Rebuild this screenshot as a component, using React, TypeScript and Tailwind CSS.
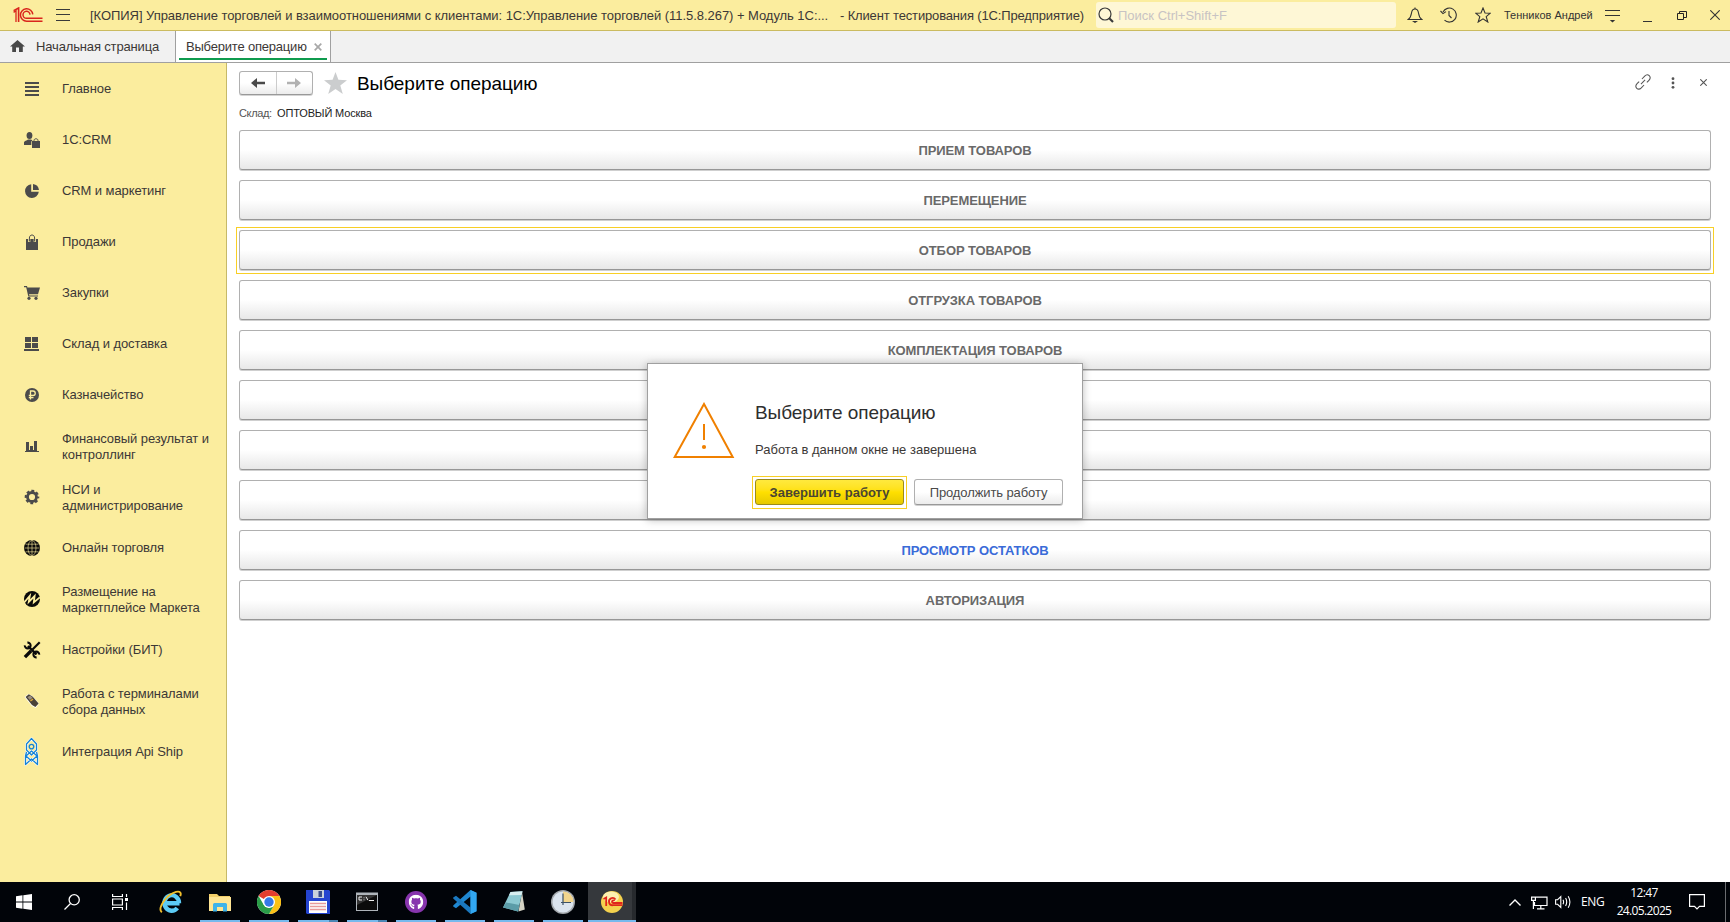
import type { ReactNode } from "react";
import { FaGithub } from "react-icons/fa";

const dark = "#4b4b4b";

function Logo1C() {
  return (
    <svg width="30" height="16" viewBox="0 0 30 16" fill="none" stroke="#d9251d" strokeWidth="1.5">
      <path d="M0.6 5.4 L3 3.8 V15" strokeWidth="1.3" />
      <path d="M0.6 3.6 L5.6 1 V15" strokeWidth="1.6" />
      <path d="M19.8 7.4 A6.2 6.2 0 1 0 13.8 14.2 H29.5" />
      <path d="M17 7.6 A3.5 3.5 0 1 0 13.6 11.3 H29.5" />
    </svg>
  );
}

function TitleBar() {
  return (
    <header className="flex h-[31px] shrink-0 items-center border-b border-[#cbbb60] bg-[#fbed9e] text-[13px] text-[#3c3836]">
      <div className="flex w-[90px] shrink-0 items-center gap-[13px] pl-[13px]">
        <Logo1C />
        <svg width="14" height="12" viewBox="0 0 14 12" fill="#3a3a3a">
          <path d="M0 0h14v1H0zM0 5h14v1H0zM0 11h14v1H0z" />
        </svg>
      </div>
      <div className="w-[750px] shrink-0 whitespace-nowrap pt-px tracking-[-0.05px]">
        [КОПИЯ] Управление торговлей и взаимоотношениями с клиентами: 1С:Управление торговлей (11.5.8.267) + Модуль 1С:...
      </div>
      <div className="w-[256px] shrink-0 whitespace-nowrap pt-px tracking-[-0.15px]">- Клиент тестирования (1С:Предприятие)</div>
      <div className="flex h-[26px] w-[300px] shrink-0 items-center gap-[4px] rounded-[3px] bg-[#fef7d6] pl-[2px] text-[#c8c3c3]">
        <svg width="16" height="16" viewBox="0 0 16 16" fill="none" stroke="#3a3a3a">
          <circle cx="7" cy="7" r="6" strokeWidth="1.2" />
          <path d="M11 11 L15 15" strokeWidth="2.2" />
        </svg>
        <span className="pt-px">Поиск Ctrl+Shift+F</span>
      </div>
      <div className="flex flex-1 items-center text-[#333]">
        <svg className="ml-[11px]" width="16" height="16" viewBox="0 0 16 16" fill="none" stroke="#333" strokeWidth="1.1">
          <path d="M1.2 12.5 C4 10.5 4.2 8 4.6 5.5 C5 3 6.4 2 8 2 C9.6 2 11 3 11.4 5.5 C11.8 8 12 10.5 14.8 12.5 Z" />
          <path d="M8 0.5 V2" />
          <path d="M5 14 H11 L8 16 Z" fill="#333" stroke="none" />
        </svg>
        <svg className="ml-[17px]" width="17" height="16" viewBox="0 0 17 16" fill="none" stroke="#333" strokeWidth="1.1">
          <path d="M3 5 A7 7 0 1 1 4.5 13.2" />
          <path d="M0.5 4 L3 6.6 L6 4.6" />
          <path d="M9 4 V8.5 L11.5 11" />
        </svg>
        <svg className="ml-[18px]" width="16" height="16" viewBox="0 0 16 16" fill="none" stroke="#333" strokeWidth="1.1">
          <path d="M8 1 L10 6 L15.3 6.2 L11.2 9.6 L12.8 15 L8 11.8 L3.2 15 L4.8 9.6 L0.7 6.2 L6 6 Z" />
        </svg>
        <span className="ml-[13px] w-[89px] whitespace-nowrap text-[11px]">Тенников Андрей</span>
        <svg className="ml-[12px] mt-[3px]" width="15" height="13" viewBox="0 0 15 13" fill="#333">
          <path d="M0 0h15v1H0zM0 5h15v1H0zM4.8 10h5.4L7.5 12.5z" />
        </svg>
        <svg className="ml-[23px] mt-px" width="9" height="12" viewBox="0 0 9 12" fill="#333">
          <path d="M0 11h9v1H0z" />
        </svg>
        <svg className="ml-[25px]" width="10" height="9" viewBox="0 0 10 9" fill="none" stroke="#222">
          <path d="M0.5 2.5h6v6h-6zM2.5 2.5v-2h7v6h-3" />
        </svg>
        <svg className="ml-[23px]" width="10" height="10" viewBox="0 0 10 10" fill="none" stroke="#333" strokeWidth="1.1">
          <path d="M0.3 0.3 L9.7 9.7 M9.7 0.3 L0.3 9.7" />
        </svg>
      </div>
    </header>
  );
}

function TabBar() {
  return (
    <nav className="flex h-8 shrink-0 border-b border-[#a0a0a0] bg-[#f1f1f1] text-[13px] tracking-[-0.15px] text-[#3c3836]">
      <div className="flex w-[175px] items-center pl-[10px]">
        <svg className="mb-[2px]" width="15" height="12" viewBox="0 0 15 12" fill="#484848">
          <path d="M7.5 0 L15 6.4 H12.8 V12 H9 V7.5 H6 V12 H2.2 V6.4 H0 Z" />
        </svg>
        <span className="ml-[11px]">Начальная страница</span>
      </div>
      <div className="flex w-[156px] flex-col border-x border-[#a0a0a0] bg-white px-[3px]">
        <div className="flex h-[27px] items-center pl-[7px] pt-[4px]">
          <span className="tracking-[-0.2px]">Выберите операцию</span>
          <svg className="ml-[7px]" width="8" height="8" viewBox="0 0 8 8" fill="none" stroke="#a8a8a8" strokeWidth="1.7">
            <path d="M0.7 0.7 L7.3 7.3 M7.3 0.7 L0.7 7.3" />
          </svg>
        </div>
        <div className="h-[2px] bg-[#0f9b4e]" />
      </div>
    </nav>
  );
}

const sections: { label: string; icon: ReactNode }[] = [
  {
    label: "Главное",
    icon: <path d="M1 1h14v2H1zM1 5h14v2H1zM1 9h14v2H1zM1 13h14v2H1z" fill={dark} />,
  },
  {
    label: "1С:CRM",
    icon: (
      <g fill={dark}>
        <ellipse cx="5.5" cy="3.5" rx="2.9" ry="3.5" />
        <path d="M0 13 V10.3 C0 9 3 8.6 4 7.5 H7 L8.5 8.5 L7.3 9.5 V13 Z" />
        <path d="M8 9 H16 V16 H8 Z" />
        <path d="M10 10.5 V8.5 C10 6.2 14 6.2 14 8.5 V10.5" fill="none" stroke={dark} />
      </g>
    ),
  },
  {
    label: "CRM и маркетинг",
    icon: (
      <g fill={dark}>
        <path d="M7.2 1.2 A6.9 6.9 0 1 0 14.8 8.8 H7.2 Z" />
        <path d="M9 1 A7 7 0 0 1 15 7 H9 Z" />
      </g>
    ),
  },
  {
    label: "Продажи",
    icon: (
      <g>
        <path d="M2 5 H14 V16 H2 Z" fill={dark} />
        <path d="M5.2 8 V4 C5.2 0 10.8 0 10.8 4 V8" fill="none" stroke="#fbed9e" strokeWidth="2.2" />
        <path d="M5.4 7.5 V4 C5.4 0 10.6 0 10.6 4 V7.5" fill="none" stroke={dark} strokeWidth="1" />
      </g>
    ),
  },
  {
    label: "Закупки",
    icon: (
      <g fill={dark}>
        <path d="M0 1 H3 L3.4 2.6 H16 L14 9.2 H5 L5.3 10.4 H14 V11.6 H4.3 L2.2 2.2 H0 Z" />
        <circle cx="5" cy="13.3" r="1.6" />
        <circle cx="12" cy="13.3" r="1.6" />
      </g>
    ),
  },
  {
    label: "Склад и доставка",
    icon: <path d="M1 1h6v5H1zM8 1H14v5H8zM1 7h6v5H1zM8 7H14v5H8zM0 13h15v2H0z" fill={dark} />,
  },
  {
    label: "Казначейство",
    icon: (
      <g>
        <circle cx="8" cy="8" r="7" fill={dark} />
        <path d="M6.5 12.5 V4 H9 C12 4 12 8.5 9 8.5 H4.8 M4.8 10.6 H9.5" fill="none" stroke="#fbed9e" strokeWidth="1.3" />
      </g>
    ),
  },
  {
    label: "Финансовый результат и контроллинг",
    icon: <path d="M2 4h3v8H2zM6 8h3v4H6zM10 3h3v9h-3zM1 13h14v1H1zM2 12h11v1H2z" fill={dark} />,
  },
  {
    label: "НСИ и администрирование",
    icon: (
      <g fill="none" stroke={dark}>
        <circle cx="8" cy="8" r="4.5" strokeWidth="2.8" />
        <circle cx="8" cy="8" r="6.2" strokeWidth="2.2" strokeDasharray="2.8 2.07" strokeDashoffset="1.4" />
      </g>
    ),
  },
  {
    label: "Онлайн торговля",
    icon: (
      <g>
        <circle cx="8" cy="8" r="8" fill="#0a0a0a" />
        <g fill="none" stroke="#fbed9e" strokeWidth="0.6">
          <path d="M8 0V16M0.5 8H15.5M1.5 4.2H14.5M1.5 11.8H14.5" />
          <ellipse cx="8" cy="8" rx="4" ry="7.6" />
        </g>
      </g>
    ),
  },
  {
    label: "Размещение на маркетплейсе Маркета",
    icon: (
      <g>
        <circle cx="8" cy="8" r="8" fill="#0a0a0a" />
        <path d="M0 11.8 L5.8 4.8 L4.8 10.8 L10.6 5 L9.8 11.4 L15.8 6.4" fill="none" stroke="#fbed9e" strokeWidth="1.8" />
      </g>
    ),
  },
  {
    label: "Настройки (БИТ)",
    icon: (
      <g fill="none" stroke="#0a0a0a">
        <path d="M4 4 L12.5 12.5" strokeWidth="2.4" />
        <path d="M0.8 3.4 A2.9 2.9 0 1 0 3.4 0.6" strokeWidth="2.1" />
        <path d="M15.2 12.6 A2.9 2.9 0 1 0 12.6 15.4" strokeWidth="2.1" />
        <path d="M15.7 0.3 L8.5 7.5" strokeWidth="2.2" />
        <path d="M7.2 8.8 L0.9 15.1" strokeWidth="3.4" />
      </g>
    ),
  },
  {
    label: "Работа с терминалами сбора данных",
    icon: (
      <g>
        <path d="M0.6 4 L4.4 0.9 L8.8 3.2 L14.9 10.6 L11.8 15 L7.8 13 Z" fill="#fff" />
        <path d="M1.6 4 L4.8 1.3 L8.8 3.8 L14.6 10.6 L11.4 14 L8 12 Z" fill="#4a4238" />
        <path d="M3.4 4.2 L6.2 2.4 L8.6 4.8 L5.8 7 Z" fill="#9b8e7c" />
        <path d="M6.4 8 L9 6.2" stroke="#d9a53a" strokeWidth="1.4" />
      </g>
    ),
  },
  {
    label: "Интеграция Api Ship",
    icon: (
      <g fill="none" strokeLinejoin="round">
        <path d="M7.5 -5.5 L12.5 0 V6 L7.5 11 L2.5 6 V0 Z M2.5 8 L1.5 12 V20.5 L7.5 15 L13.5 20.5 V12 L12.5 8 M2 12 L7.5 17 L13 12 L7.5 7 Z" stroke="#fff" strokeWidth="2.4" />
        <path d="M7.5 -5.5 L12.5 0 V6 L7.5 11 L2.5 6 V0 Z M2.5 8 L1.5 12 V20.5 L7.5 15 L13.5 20.5 V12 L12.5 8 M2 12 L7.5 17 L13 12 L7.5 7 Z" stroke="#1583d6" strokeWidth="1.3" />
        <circle cx="7.5" cy="2.6" r="2.3" stroke="#1583d6" strokeWidth="1.3" fill="#fbed9e" />
      </g>
    ),
  },
];

function Sidebar() {
  return (
    <aside className="w-[227px] shrink-0 border-r border-[#c6b968] bg-[#fbed9e]">
      {sections.map(({ label, icon }) => (
        <div key={label} className="flex h-[51px] items-center pl-6 pt-[3px]">
          <svg className="mb-[2px] shrink-0 overflow-visible" width="16" height="16" viewBox="0 0 16 16">
            {icon}
          </svg>
          <span
            className={
              "ml-[22px] w-[152px] text-[13px] leading-4 tracking-[-0.09px] text-[#3c3836] " +
              (label.length > 20 ? "" : "pb-[2px]")
            }
          >
            {label}
          </span>
        </div>
      ))}
    </aside>
  );
}

const operations = [
  "ПРИЕМ ТОВАРОВ",
  "ПЕРЕМЕЩЕНИЕ",
  "ОТБОР ТОВАРОВ",
  "ОТГРУЗКА ТОВАРОВ",
  "КОМПЛЕКТАЦИЯ ТОВАРОВ",
  "",
  "",
  "",
  "ПРОСМОТР ОСТАТКОВ",
  "АВТОРИЗАЦИЯ",
];

function FocusFrame() {
  return <span className="pointer-events-none absolute -left-1 -right-1 -top-1 bottom-[-5px] border border-[#f8cf26]" />;
}

function Main() {
  return (
    <main className="flex flex-1 flex-col bg-white pl-3 pr-[19px] pt-2">
      <div className="flex h-[25px] items-center">
        <div className="mb-px flex h-[24px] w-[74px] rounded-[3px] border border-[#b0b0b0] border-b-[#999] bg-linear-to-b from-white from-50% to-[#ececec] shadow-[0_1px_0_#d4d4d4]">
          <div className="flex flex-1 items-center justify-center border-r border-[#ccc]">
            <svg width="14" height="10" viewBox="0 0 14 10" fill="#4a4a4a">
              <path d="M0 5 L6 0 V3.8 H14 V6.2 H6 V10 Z" />
            </svg>
          </div>
          <div className="flex flex-1 items-center justify-center">
            <svg width="14" height="10" viewBox="0 0 14 10" fill="#b2b2b2">
              <path d="M14 5 L8 0 V3.8 H0 V6.2 H8 V10 Z" />
            </svg>
          </div>
        </div>
        <svg className="mb-[2px] ml-[11px]" width="23" height="22" viewBox="0 0 23 22" fill="#cbcdce">
          <path d="M11.5 0 L14.4 7.8 L23 8.3 L16.3 13.4 L18.8 22 L11.5 17 L4.2 22 L6.7 13.4 L0 8.3 L8.6 7.8 Z" />
        </svg>
        <h1 className="ml-[10px] flex-1 text-[19px] leading-6 tracking-[-0.05px] text-black">Выберите операцию</h1>
        <svg className="mb-[3px]" width="16" height="16" viewBox="0 0 17 17" fill="none" stroke="#555" strokeWidth="1.1">
          <path d="M7.4 5.3 L10.3 2.2 C12 0.5 14 0.7 15.1 1.8 C16.3 3 16.4 5 14.8 6.7 L12.6 9" />
          <path d="M9.6 11.7 L6.7 14.8 C5 16.5 3 16.3 1.9 15.2 C0.7 14 0.6 12 2.2 10.3 L4.4 8" />
          <path d="M6.3 10.7 L10.7 6.3" />
        </svg>
        <svg className="mb-[2px] ml-[20px]" width="4" height="12" viewBox="0 0 4 12" fill="#555">
          <circle cx="2" cy="1.7" r="1.4" />
          <circle cx="2" cy="6" r="1.4" />
          <circle cx="2" cy="10.3" r="1.4" />
        </svg>
        <svg className="mb-[2px] ml-[25px] mr-[4px]" width="7" height="7" viewBox="0 0 7 7" fill="none" stroke="#555" strokeWidth="1.1">
          <path d="M0.3 0.3 L6.7 6.7 M6.7 0.3 L0.3 6.7" />
        </svg>
      </div>
      <div className="mt-[10px] flex h-[14px] items-center text-[11px] leading-[14px]">
        <span className="w-[38px] tracking-[-0.35px] text-[#555]">Склад:</span>
        <span className="tracking-[-0.15px] text-[#222]">ОПТОВЫЙ Москва</span>
      </div>
      <div className="mt-[10px] flex flex-col gap-[10px]">
        {operations.map((label, i) => (
          <button
            key={i}
            className={
              "relative h-10 rounded-[3px] border border-[#b0b0b0] border-b-[#979797] bg-linear-to-b from-white from-50% to-[#e8e8e8] pt-[2px] text-[13px] font-bold tracking-[-0.09px] shadow-[0_1px_0_#cfcfcf] " +
              (i === 8 ? "text-[#3a6bd8]" : "text-[#696969]")
            }
          >
            {label}
            {i === 2 && <FocusFrame />}
          </button>
        ))}
      </div>
    </main>
  );
}

function Dialog() {
  return (
    <div className="absolute left-[647px] top-[363px] flex h-[156px] w-[436px] border border-[#a0a0a0] bg-white pl-[25px] shadow-[0_1px_8px_rgba(0,0,0,0.26)]">
      <svg className="mt-[38px] shrink-0" width="62" height="57" viewBox="0 0 62 57" fill="none" stroke="#f08000" strokeWidth="2">
        <path d="M31 2 L59.7 55 H1.7 Z" />
        <path d="M31 22 V38" />
        <circle cx="31" cy="45" r="2.1" fill="#f08000" stroke="none" />
      </svg>
      <div className="ml-5 pt-[37px]">
        <h2 className="text-[19px] leading-6 tracking-[-0.05px] text-[#2e2e2e]">Выберите операцию</h2>
        <p className="mt-[17px] whitespace-nowrap text-[13px] leading-4 text-[#3c3836]">Работа в данном окне не завершена</p>
        <div className="mt-[21px] flex gap-[10px]">
          <button className="relative h-[26px] w-[149px] rounded-[3px] border border-[#9a8a1e] bg-linear-to-b from-[#ffe93d] via-[#ffe000] to-[#e6c900] pt-px text-[13px] font-bold text-[#4a4632]">
            Завершить работу
            <FocusFrame />
          </button>
          <button className="h-[26px] w-[149px] rounded-[3px] border border-[#b0b0b0] border-b-[#999] bg-linear-to-b from-white from-50% to-[#ececec] pt-px text-[13px] tracking-[-0.1px] text-[#4a4a4a] shadow-[0_1px_0_#d0d0d0]">
            Продолжить работу
          </button>
        </div>
      </div>
    </div>
  );
}

const apps: { name: string; running: boolean; grouped?: boolean; icon: ReactNode }[] = [
  {
    name: "ie",
    running: false,
    icon: (
      <g fill="none">
        <path d="M6.5 13.2 H20.5 M20 13.2 A7.3 7.8 0 1 0 18.3 18" stroke="#5ccbf5" strokeWidth="4.4" />
        <path d="M2.8 22.4 C-1.8 18 7.5 4.5 17 1.9 C22 0.8 22.3 3.6 21.2 6.2" stroke="#f2bf2c" strokeWidth="1.9" />
      </g>
    ),
  },
  {
    name: "explorer",
    running: true,
    icon: (
      <g>
        <path d="M1 4 H9 L11 6 H22 V21 H1 Z" fill="#f3cf6a" />
        <path d="M1 7 H23 V21 H1 Z" fill="#ffe594" />
        <path d="M5 21.5 V14.5 Q5 13 6.5 13 H17.5 Q19 13 19 14.5 V21.5 H15 V17 H9 V21.5 Z" fill="#3fb3ea" />
      </g>
    ),
  },
  {
    name: "chrome",
    running: true,
    icon: (
      <g>
        <circle cx="12" cy="12" r="12" fill="#fff" />
        <path d="M12 12 L1.6 6 A12 12 0 0 1 22.4 6 Z" fill="#e43e2f" />
        <path d="M12 6 H22.4 A12 12 0 0 1 12 24 L17.2 15 Z" fill="#fbc116" />
        <path d="M1.6 6 L6.8 15 L12 18 L17 15.2 L12 24 A12 12 0 0 1 1.6 6 Z" fill="#2a9d48" />
        <circle cx="12" cy="12" r="6" fill="#fff" />
        <circle cx="12" cy="12" r="4.7" fill="#3579e8" />
      </g>
    ),
  },
  {
    name: "floppy",
    running: true,
    grouped: true,
    icon: (
      <g>
        <path d="M0 0 H23 L24 1 V24 H1 L0 23 Z" fill="#2444d0" />
        <path d="M7 0 H18 V8 H7 Z" fill="#c9d1dc" />
        <path d="M12.5 1 H16 V7 H12.5 Z" fill="#3a4d8c" />
        <path d="M3 11 H21 V23 H3 Z" fill="#fff" />
        <path d="M4 13.5 H20 M4 16.5 H20 M4 19.5 H20" stroke="#e89a9a" strokeWidth="1.3" />
      </g>
    ),
  },
  {
    name: "cmd",
    running: true,
    grouped: true,
    icon: (
      <g>
        <path d="M1 2.5 H23 V21 H1 Z" fill="#aeb4ba" />
        <path d="M2 5 H22 V20 H2 Z" fill="#0b0b0b" />
        <path d="M2 5 H22 L2 15 Z" fill="#333" />
        <path d="M7 7 H4 V10 H7 M9 7.5 V8.2 M9 9.5 V10.2 M11 6.8 L13 10.3 M14 10.5 H19" stroke="#eee" fill="none" strokeWidth="1" />
      </g>
    ),
  },
  {
    name: "github",
    running: true,
    icon: (
      <g>
        <circle cx="12" cy="12" r="11" fill="#8735ad" />
        <FaGithub x="4.5" y="4.5" size={15} color="#fff" />
      </g>
    ),
  },
  {
    name: "code",
    running: true,
    icon: (
      <g>
        <path d="M17.5 0 L23.5 2.8 V21.2 L17.5 24 L17.5 6.6 L3 18.3 L0.2 16.6 V15.6 Z" fill="#1f87d0" />
        <path d="M17.5 24 L0.2 8.4 V7.4 L3 5.7 L17.5 17.4 Z" fill="#1a78bf" />
        <path d="M17.5 0 L23.5 2.8 V21.2 L17.5 24 Z" fill="#32a8f2" />
      </g>
    ),
  },
  {
    name: "notepad",
    running: true,
    icon: (
      <g>
        <path d="M20 2 L22.8 19.5 L16.5 21.5 Z" fill="#d5d3c4" />
        <path d="M8.5 2 L20.5 1.2 L16 21.5 L1 17.5 Z" fill="#8cc9d2" />
        <path d="M8.5 2 L20.5 1.2 L19.6 5 L7 5.2 Z" fill="#d7eef0" />
        <path d="M4 12.5 L17.4 15 L16 21.5 L1 17.5 Z" fill="#5b9ca8" />
      </g>
    ),
  },
  {
    name: "scheduler",
    running: true,
    icon: (
      <g>
        <circle cx="12" cy="12" r="12" fill="#a4a9ae" />
        <circle cx="12" cy="12" r="10.5" fill="#dbe4ee" />
        <path d="M12 12 V1.5 A10.5 10.5 0 0 1 22.5 12 Z" fill="#f2d58c" />
        <path d="M12 3.5 V15 M10 12.5 H20" stroke="#3d5266" strokeWidth="1.2" />
      </g>
    ),
  },
];

function TaskButton({ running, grouped, children }: { running: boolean; grouped?: boolean; children: ReactNode }) {
  return (
    <div className="flex h-10 w-10 shrink-0 flex-col items-center justify-between">
      <svg className="mt-2" width="24" height="24" viewBox="0 0 24 24">
        {children}
      </svg>
      {running && (
        <div className="flex h-[2px] w-full bg-[#76b9ed]">
          {grouped && <div className="ml-auto w-[9px] bg-[#4a85b3]" />}
        </div>
      )}
    </div>
  );
}

function Taskbar() {
  return (
    <footer className="flex h-10 shrink-0 bg-[#010409] text-white">
      <div className="flex w-[151px] shrink-0 items-center pl-4">
        <svg width="16" height="16" viewBox="0 0 16 16" fill="#fff">
          <path d="M0 2.2 L6.5 1.3 V7.5 H0zM7.3 1.2 L16 0 V7.5 H7.3zM0 8.4 H6.5 V14.7 L0 13.8zM7.3 8.4 H16 V16 L7.3 14.8z" />
        </svg>
        <svg className="ml-8" width="16" height="16" viewBox="0 0 16 16" fill="none" stroke="#fff" strokeWidth="1.3">
          <circle cx="10.2" cy="5.8" r="5.1" />
          <path d="M6.5 9.5 L0.5 15.5" />
        </svg>
        <svg className="ml-8" width="16" height="16" viewBox="0 0 16 16" fill="none" stroke="#fff" strokeWidth="1.2">
          <path d="M0.6 0 V2.5 H10.4 V0 M0.6 5 H10.4 V11 H0.6 Z M0.6 16 V13.5 H10.4 V16 M14.5 0 V3 M14.5 8.5 V16" />
          <path d="M13 4 H16 V7 H13 Z" fill="#fff" stroke="none" />
        </svg>
      </div>
      <div className="flex gap-[9px]">
        {apps.map((a) => (
          <TaskButton key={a.name} running={a.running} grouped={a.grouped}>
            {a.icon}
          </TaskButton>
        ))}
      </div>
      <div className="ml-[5px] flex w-12 shrink-0 flex-col justify-between border-r-4 border-[#26292d] bg-[#35383c]">
        <svg className="ml-3 mt-2" width="24" height="24" viewBox="0 0 24 24">
          <circle cx="12" cy="12" r="11" fill="#f5d24e" />
          <ellipse cx="11" cy="7" rx="8" ry="5.5" fill="#fdf0b0" />
          <path d="M3.5 9 L6.2 7.5 V16 M15.5 9.5 A3.6 3.6 0 1 0 13 15.2 H22.5 M14.4 11 A1.3 1.3 0 1 0 13 13 H22.5" fill="none" stroke="#e0261c" strokeWidth="1.8" />
        </svg>
        <div className="mr-[-4px] h-[2px] bg-[#76b9ed]" />
      </div>
      <div className="ml-auto flex items-center font-['Open_Sans','Noto_Sans',sans-serif] text-[12px]">
        <svg width="12" height="7" viewBox="0 0 12 7" fill="none" stroke="#fff" strokeWidth="1.4">
          <path d="M0.5 6.5 L6 1 L11.5 6.5" />
        </svg>
        <svg className="ml-[10px] mt-px" width="17" height="14" viewBox="0 0 17 14" fill="none" stroke="#fff" strokeWidth="1.2">
          <path d="M5 1.1 H16 V9.5 H3.5 V6 M9.8 9.5 V12.8 M6 12.9 H13.5" />
          <path d="M0.6 1.1 H4.4 V4.4 H0.6 Z M2.4 4.4 V13" />
        </svg>
        <svg className="ml-[7px]" width="17" height="14" viewBox="0 0 17 14" fill="none" stroke="#fff" strokeWidth="1.1">
          <path d="M0.6 4.7 H2.6 L5.8 1.6 V12.4 L2.6 9.3 H0.6 Z" />
          <path d="M8 4.8 Q9.2 7 8 9.2 M10.6 3 Q12.8 7 10.6 11 M13.2 1.2 Q16.6 7 13.2 12.8" />
        </svg>
        <span className="ml-[9px] w-[35px] tracking-[-0.3px]">ENG</span>
        <div className="w-[56px] text-center text-[12px] leading-[18px] tracking-[-0.65px]">
          <div>12:47</div>
          <div>24.05.2025</div>
        </div>
        <svg className="ml-[17px]" width="16" height="16" viewBox="0 0 16 16" fill="none" stroke="#fff" strokeWidth="1.2">
          <path d="M0.6 0.6 H15.4 V12.4 H10.5 L8 15 L5.5 12.4 H0.6 Z" />
        </svg>
        <div className="ml-5 h-10 w-[5px] border-l border-[#6a6c6f]" />
      </div>
    </footer>
  );
}

export default function App() {
  return (
    <div className="relative flex h-[922px] w-[1730px] flex-col overflow-hidden bg-white font-['Liberation_Sans',Arial,sans-serif]">
      <TitleBar />
      <TabBar />
      <div className="flex min-h-0 flex-1">
        <Sidebar />
        <Main />
      </div>
      <Taskbar />
      <Dialog />
    </div>
  );
}
